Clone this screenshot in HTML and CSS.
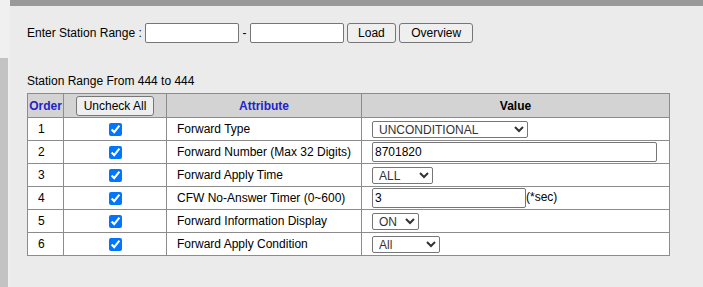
FILE: index.html
```html
<!DOCTYPE html>
<html>
    <head>
        <meta http-equiv="content-type" content="text/html; charset=utf-8" />
        <title>Call Forward</title>
        <link rel="stylesheet" href="styles.css">
    </head>
    <body>
        <div class="frame">
            <div class="side">
                <div class="side-bar"></div>
            </div>
            <div class="main">
                <div class="topbar"></div>
                <div class="content">
                    <div class="range">
                        Enter Station Range : <input type="text" class="f-range"> - <input type="text" class="f-range">
                        <button class="btn">Load</button>
                        <button class="btn">Overview</button>
                    </div>
                    <p class="caption">Station Range From 444 to 444</p>
                    <table class="grid">
                        <colgroup>
                            <col class="c-order">
                            <col class="c-check">
                            <col class="c-attr">
                            <col class="c-value">
                        </colgroup>
                        <tr>
                            <th class="blue">Order</th>
                            <th><button class="btn btn-sm">Uncheck All</button></th>
                            <th class="blue">Attribute</th>
                            <th>Value</th>
                        </tr>
                        <tr>
                            <td>1</td>
                            <td class="center"><input type="checkbox" checked></td>
                            <td>Forward Type</td>
                            <td>
                                <select class="sel sel-type">
                                    <option>UNCONDITIONAL</option>
                                    <option>BUSY</option>
                                    <option>NO ANSWER</option>
                                </select>
                            </td>
                        </tr>
                        <tr>
                            <td>2</td>
                            <td class="center"><input type="checkbox" checked></td>
                            <td>Forward Number (Max 32 Digits)</td>
                            <td><input type="text" class="f-text f-number" value="8701820"></td>
                        </tr>
                        <tr>
                            <td>3</td>
                            <td class="center"><input type="checkbox" checked></td>
                            <td>Forward Apply Time</td>
                            <td>
                                <select class="sel sel-time">
                                    <option>ALL</option>
                                    <option>DAY</option>
                                    <option>NIGHT</option>
                                </select>
                            </td>
                        </tr>
                        <tr>
                            <td>4</td>
                            <td class="center"><input type="checkbox" checked></td>
                            <td>CFW No-Answer Timer (0~600)</td>
                            <td><input type="text" class="f-text f-timer" value="3">(*sec)</td>
                        </tr>
                        <tr>
                            <td>5</td>
                            <td class="center"><input type="checkbox" checked></td>
                            <td>Forward Information Display</td>
                            <td>
                                <select class="sel sel-on">
                                    <option>ON</option>
                                    <option>OFF</option>
                                </select>
                            </td>
                        </tr>
                        <tr>
                            <td>6</td>
                            <td class="center"><input type="checkbox" checked></td>
                            <td>Forward Apply Condition</td>
                            <td>
                                <select class="sel sel-cond">
                                    <option>All</option>
                                    <option>Internal</option>
                                    <option>External</option>
                                </select>
                            </td>
                        </tr>
                    </table>
                </div>
            </div>
        </div>
    </body>
</html>
```

FILE: styles.css
```css
*{
    box-sizing: border-box;
}
body{
    margin: 0;
    height: 287px;
    overflow: hidden;
    font-family: "Liberation Sans", Arial, sans-serif;
    font-size: 12px;
    color: #000;
    background: #ebebeb;
}
.frame{
    display: flex;
    height: 287px;
}
.side{
    width: 10px;
    background: #f0f0f0;
    display: flex;
    flex-direction: column;
}
.side-bar{
    margin-top: 58px;
    width: 8px;
    flex: 1;
    background: #c3c3c3;
}
.main{
    flex: 1;
    background: #ebebeb;
}
.topbar{
    height: 6px;
    background: #999;
}
.content{
    padding: 17px 0 0 17px;
}
.range{
    height: 20px;
    line-height: 20px;
    white-space: nowrap;
}
.f-range{
    width: 94px;
    height: 20px;
    vertical-align: top;
}
input[type=text]{
    margin: 0;
    padding: 1px 2px;
    border: 1px solid #767676;
    border-radius: 2px;
    background: #fff;
    font-family: "Liberation Sans", Arial, sans-serif;
    font-size: 12px;
    color: #000;
}
.btn{
    height: 20px;
    margin: 0;
    padding: 0 10px;
    border: 1px solid #767676;
    border-radius: 3px;
    background: #efefef;
    font-family: "Liberation Sans", Arial, sans-serif;
    font-size: 12px;
    color: #000;
    vertical-align: top;
}
.btn + .btn{
    padding: 0 11px;
}
.btn-sm{
    padding: 0 7px;
}
.caption{
    margin: 31px 0 0 0;
    line-height: 14px;
}
.grid{
    width: 642px;
    margin-top: 5px;
    table-layout: fixed;
    border-collapse: collapse;
    background: #fff;
}
.grid th{
    background: #d3d3d3;
    font-weight: bold;
    height: 24px;
    padding: 0;
    text-align: center;
    white-space: nowrap;
    border: 1px solid #8c8c8c;
}
.grid td{
    height: 23px;
    padding: 0 0 0 10px;
    white-space: nowrap;
    border: 1px solid #8c8c8c;
}
.grid td.center{
    padding: 0;
    text-align: center;
}
.c-order{ width: 36px; }
.c-check{ width: 103px; }
.c-attr{ width: 195px; }
.c-value{ width: 308px; }
.blue{
    color: #2323c8;
}
.grid input[type=checkbox]{
    width: 13px;
    height: 13px;
    margin: 0;
    vertical-align: middle;
}
.sel{
    height: 17px;
    padding: 0 0 0 2px;
    border: 1px solid #767676;
    border-radius: 2px;
    background: #fff;
    font-family: "Liberation Sans", Arial, sans-serif;
    font-size: 12px;
    color: #333;
    vertical-align: middle;
}
.sel-type{ width: 156px; }
.sel-time{ width: 61px; }
.sel-on{ width: 47px; }
.sel-cond{ width: 68px; }
.f-text{
    height: 20px;
    vertical-align: middle;
}
.f-number{ width: 285px; }
.f-timer{ width: 154px; }
```
